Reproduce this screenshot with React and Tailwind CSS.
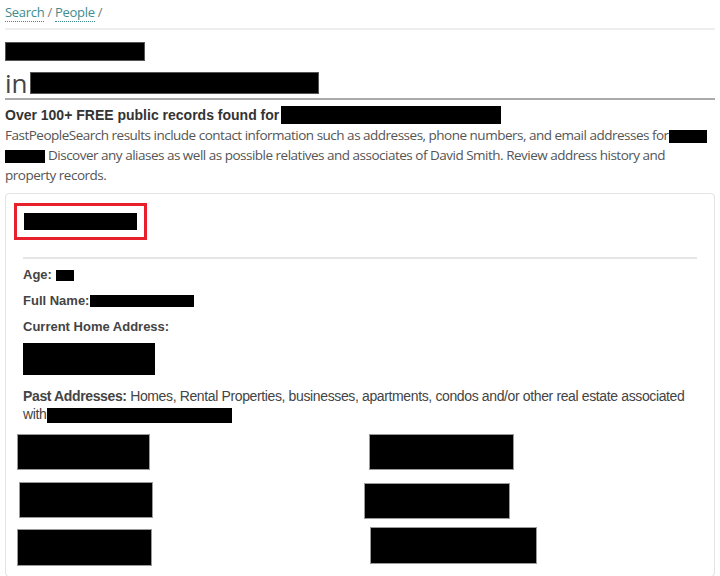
export default function App() {
  const pastAddresses = [
    { w: 133, h: 36, ml: 4, mt: 0 },
    { w: 145, h: 36, ml: 9, mt: 0 },
    { w: 134, h: 36, ml: 6, mt: 12 },
    { w: 146, h: 36, ml: 4, mt: 13 },
    { w: 135, h: 37, ml: 4, mt: 10 },
    { w: 167, h: 37, ml: 10, mt: 8 },
  ];

  return (
    <div className="min-h-screen w-full bg-white px-[5px] text-[#555]">
      {/* Breadcrumb */}
      <div className="h-[26px] pt-[3px] text-[13px] leading-[18px] font-['Open_Sans',sans-serif] tracking-[-0.3px]">
        <a className="text-[#3d8d8f] border-b border-dotted border-[#3d8d8f]">Search</a>
        <span className="text-[#777]"> / </span>
        <a className="text-[#3d8d8f] border-b border-dotted border-[#3d8d8f]">People</a>
        <span className="text-[#777]"> /</span>
      </div>
      <div className="h-[2px] bg-[#eeeeee] mt-[2px]" />

      {/* Title */}
      <div className="mt-[12px] h-[19px] w-[140px] bg-black border border-[#555]" />
      <div className="mt-[9px] flex items-center h-[26px] font-['Open_Sans',sans-serif]">
        <span className="text-[26px] leading-[26px] text-[#444]">in</span>
        <span className="ml-[2px] h-[22px] w-[289px] bg-black border border-[#555]" />
      </div>
      <div className="mt-[2px] h-[2px] bg-[#aaaaaa]" />

      {/* Records heading */}
      <div className="mt-[6px] flex items-center h-[18px] font-['Liberation_Sans',Arial,sans-serif] font-bold text-[14px] text-[#333]">
        <span>Over 100+ FREE public records found for</span>
        <span className="ml-[2px] h-[18px] w-[220px] bg-black" />
      </div>
      <p className="mt-[1px] text-[13.5px] leading-[20px] tracking-[-0.5px] text-[#555] font-['Open_Sans',sans-serif] pr-[4px]">
        FastPeopleSearch results include contact information such as addresses, phone numbers, and email addresses for
        <span className="inline-block align-middle h-[13px] w-[38px] bg-black" />{" "}
        <span className="inline-block align-middle h-[13px] w-[40px] bg-black" /> Discover any aliases as well as possible relatives and
        associates of David Smith. Review address history and property records.
      </p>

      {/* Card */}
      <div className="mt-[8px] rounded-[4px] border border-[#e3e3e3] pb-[10px] font-['Liberation_Sans',Arial,sans-serif]">
        <div className="pl-[8px] pt-[9px]">
          <div className="inline-flex border-[3px] border-[#e8202b] px-[7px] py-[7px]">
            <div className="h-[17px] w-[113px] bg-black" />
          </div>
        </div>
        <div className="mx-[17px] mt-[17px] h-[2px] bg-[#e5e5e5]" />

        <div className="px-[17px] pt-[8px] text-[13px] text-[#444]">
          <div className="flex items-center h-[16px]">
            <span className="font-bold">Age:</span>
            <span className="ml-[4px] h-[11px] w-[18px] bg-black" />
          </div>
          <div className="mt-[10px] flex items-center h-[16px]">
            <span className="font-bold">Full Name:</span>
            <span className="ml-[1px] h-[12px] w-[104px] bg-black" />
          </div>
          <div className="mt-[10px] h-[16px] font-bold leading-[16px]">Current Home Address:</div>
          <div className="mt-[8px] h-[32px] w-[132px] bg-black" />

          <p className="mt-[12px] text-[14px] leading-[18px] tracking-[-0.37px]">
            <span className="font-bold">Past Addresses:</span> Homes, Rental Properties, businesses, apartments, condos and/or other real
            estate associated with
            <span className="inline-block align-middle h-[15px] w-[185px] bg-black ml-[1px]" />
          </p>
        </div>

        <div className="mt-[11px] grid grid-cols-2 px-[7px]">
          {pastAddresses.map((b, i) => (
            <div key={i} className="flex">
              <div
                className="bg-black border border-[#999]"
                style={{ width: b.w, height: b.h, marginLeft: b.ml, marginTop: b.mt }}
              />
            </div>
          ))}
        </div>
      </div>
    </div>
  );
}
